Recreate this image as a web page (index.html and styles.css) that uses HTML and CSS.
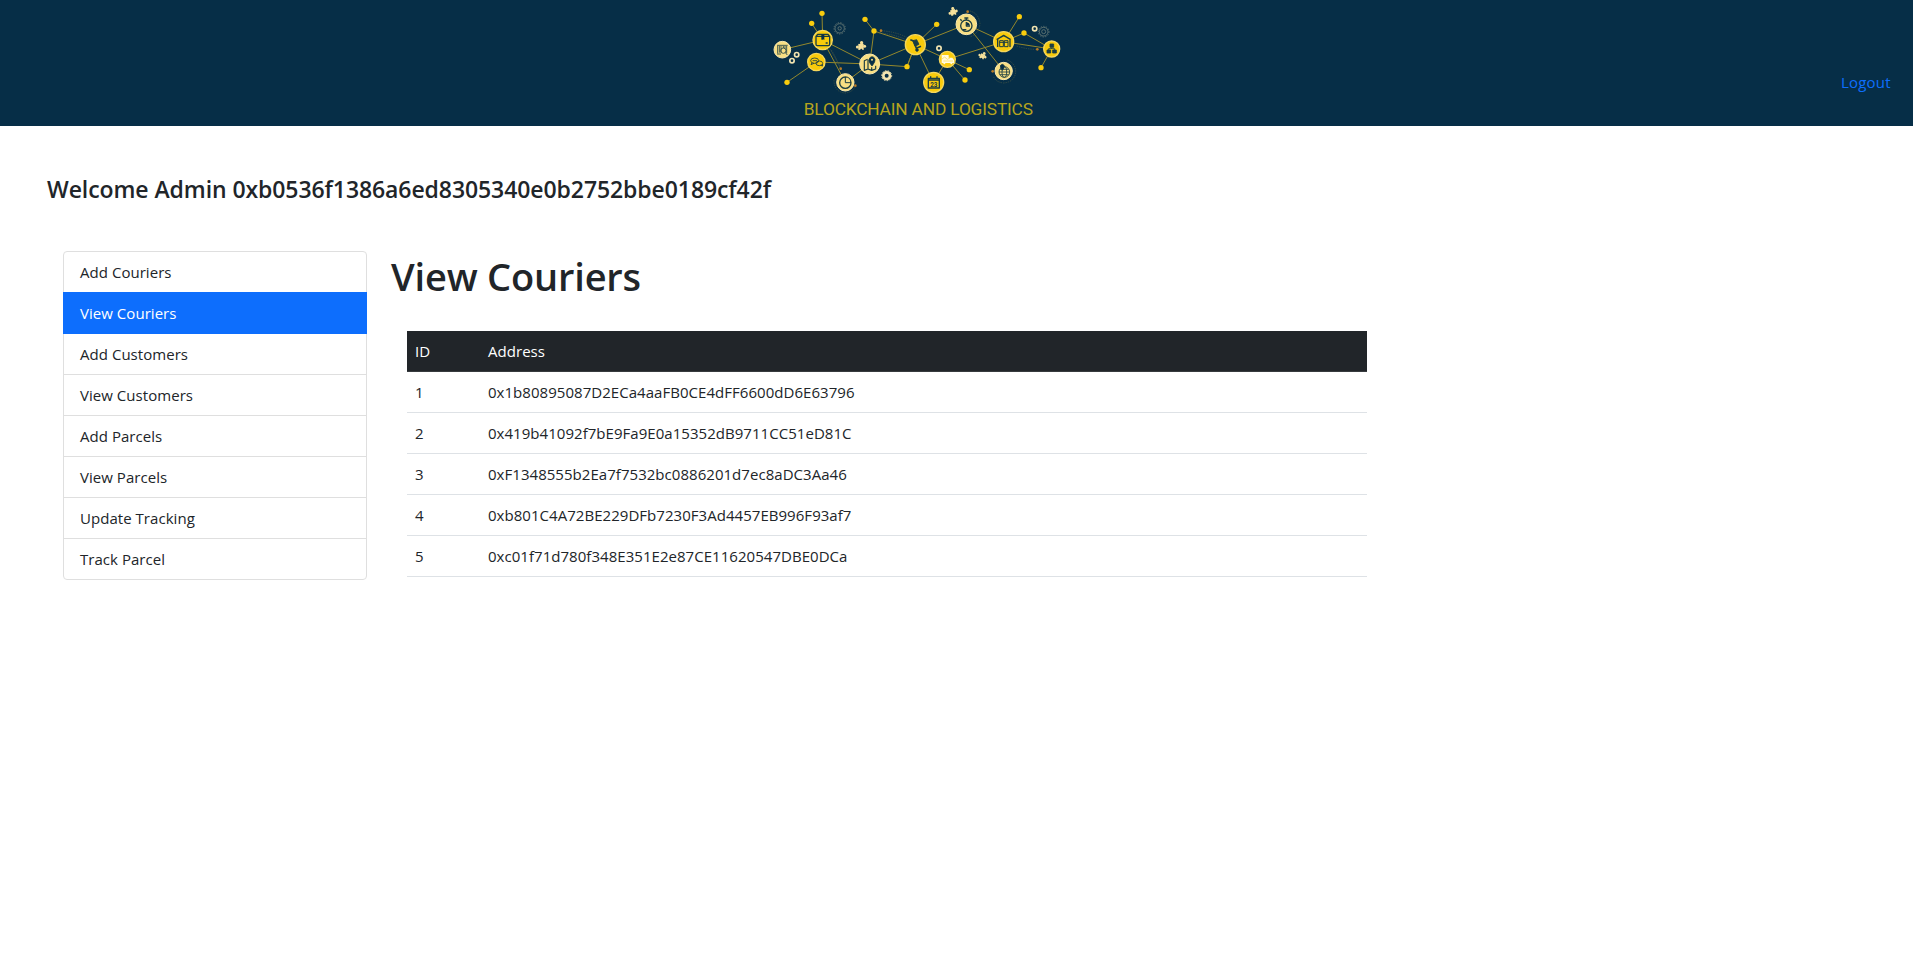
FILE: index.html
```html
<!DOCTYPE html>
<html lang="en">
<head>
<meta charset="utf-8">
<title>Blockchain and Logistics</title>
<link rel="stylesheet" href="styles.css">
</head>
<body>
<header class="topbar">
  <div class="brand">
    <svg class="logo" viewBox="0 0 930 378" role="img" aria-label="Blockchain and Logistics">
      <defs>
        <g id="puzzle" fill="#f5e09a">
          <rect x="-9" y="-7" width="18" height="20"/>
          <circle cx="2" cy="-11" r="5.5"/><circle cx="-12" cy="3" r="5"/><circle cx="12" cy="1" r="5"/>
          <circle cx="1" cy="13" r="3.5" fill="#062e47"/>
        </g>
      </defs>
      <g class="links">
        <path d="M67 149L188 120L186 40M155 70L188 120L329 192L441 200L466 134L342 93L315 58M342 93L329 192L466 134M81 247L169 186L329 192L256 247L188 120"/>
        <path d="M466 134L530 73M466 134L619 73L731 125L778 50M731 125L792 99L875 147L731 125L562 178L466 134L520 247L562 178L628 209M562 178L615 240M619 73L731 213M875 147L843 203M466 134L441 200"/>
      </g>
      <g class="orbits">
        <path d="M206 142Q226 170 241 205M214 150Q232 180 244 212M364 92Q410 96 440 112M352 98Q400 102 436 118M222 240Q222 276 256 279Q276 277 286 260M630 33Q657 40 660 72Q656 100 632 110M742 180Q768 190 767 218Q762 246 731 249Q705 246 700 228M770 138Q800 148 830 148"/>
      </g>
      <g class="dots">
        <circle cx="186" cy="40" r="8"/><circle cx="155" cy="70" r="8"/><circle cx="315" cy="58" r="8"/><circle cx="342" cy="93" r="8"/><circle cx="81" cy="247" r="8"/><circle cx="441" cy="200" r="8"/><circle cx="530" cy="73" r="8"/><circle cx="778" cy="50" r="8"/><circle cx="792" cy="99" r="8"/><circle cx="628" cy="209" r="8"/><circle cx="615" cy="240" r="8"/><circle cx="843" cy="203" r="8"/>
      </g>
      <g class="sparks">
        <circle cx="363" cy="92" r="4"/><circle cx="242" cy="206" r="4"/><circle cx="286" cy="257" r="4"/><circle cx="623" cy="35" r="4"/><circle cx="698" cy="214" r="4"/><circle cx="832" cy="148" r="4"/>
      </g>

      <g class="pale">
        <circle cx="67" cy="149" r="25"/><circle cx="329" cy="192" r="30"/><circle cx="256" cy="247" r="26"/><circle cx="619" cy="73" r="31"/><circle cx="731" cy="213" r="26"/>
      </g>
      <g class="gold">
        <circle cx="188" cy="120" r="29"/><circle cx="169" cy="186" r="26"/><circle cx="466" cy="134" r="30"/><circle cx="521" cy="247" r="30"/><circle cx="562" cy="178" r="24"/><circle cx="731" cy="125" r="30"/><circle cx="875" cy="147" r="24"/>
      </g>

      <g class="rings">
        <circle cx="110" cy="164" r="6.5"/><circle cx="96" cy="182" r="6.5"/><circle cx="537" cy="145" r="6.5"/><circle cx="824" cy="86" r="6.5"/>
        <circle cx="380" cy="227" r="10" stroke-width="8"/>
        <circle cx="380" cy="227" r="15" stroke-width="3" stroke-dasharray="5 4"/>
      </g>
      <g class="gears">
        <circle cx="239" cy="85" r="14"/><circle cx="239" cy="85" r="17" stroke-dasharray="4 4"/><circle cx="239" cy="85" r="5"/>
        <circle cx="851" cy="95" r="13"/><circle cx="851" cy="95" r="16" stroke-dasharray="4 4"/><circle cx="851" cy="95" r="6"/>
      </g>
      <use href="#puzzle" transform="translate(303 138) scale(.9)"/>
      <use href="#puzzle" transform="translate(579 35) rotate(-15) scale(.85)"/>
      <use href="#puzzle" transform="translate(668 167) rotate(25) scale(.75)"/>

      <g class="glyph">
        <path d="M53 138V160M58 138V158M63 138V158M70 138V144M75 138V146M80 138V160M51 136H83M51 162H63"/>
        <circle cx="70" cy="152" r="8"/><path d="M76 158L82 165"/>
        <path d="M168 109L173 103H204L209 109V133Q209 137 205 137H172Q168 137 168 133ZM168 109H209M188 103V119M197 129H203" stroke-width="4"/>
        <path d="M184 104H193V120L188 116L184 120Z" fill="#062e47" stroke="none"/>
        <ellipse cx="164" cy="182" rx="12" ry="8"/><ellipse cx="178" cy="190" rx="10" ry="7"/><path d="M156 188L153 194L162 190M182 196L188 198L187 192M158 182H171"/>
        <path d="M323 178L313 182V211L324 207L335 211L347 207V197M324 180V206M335 202V210" stroke-width="3.5"/>
        <path d="M336 198Q324 185 327 178Q330 170 336 170Q343 170 345 178Q347 185 336 198Z" fill="#062e47"/><circle cx="336" cy="179" r="3" fill="#f8df83" stroke="none"/>
        <circle cx="256" cy="248" r="17" stroke-width="4"/><path d="M256 231V248H273" stroke-width="3"/><path d="M260 232V243H271Q269 235 260 232Z" fill="#f8df83" stroke="none"/>
        <path d="M451 119L461 123L469 145L483 139" stroke-width="5"/><path d="M458 122L470 119L477 133L465 139Z" fill="#1b3d43"/><circle cx="471" cy="150" r="4" fill="#062e47"/>
        <path d="M505 235H538V264H505ZM505 240H538M512 229V237M531 229V237" stroke-width="4"/>
        <circle cx="619" cy="77" r="17" stroke-width="4"/><path d="M613 54H625M619 54V60M605 62L601 58M619 66V78H630M619 89H609" stroke-width="4"/><path d="M621 67V76H630Q628 69 621 67Z" fill="#062e47" stroke="none"/>
        <path d="M713 141V117L731 107L750 117V141M710 119L731 106L752 119" stroke-width="4"/><path d="M719 122H730V140H719ZM733 122H744V140H733Z" stroke-width="3"/><path d="M719 127H744" stroke-width="3"/>
        <circle cx="733" cy="216" r="16"/><ellipse cx="733" cy="216" rx="7" ry="16"/><path d="M717 216H749M720 208H746M720 224H746"/><path d="M727 211Q718 201 722 196Q727 190 732 196Q736 201 727 211Z" fill="#062e47"/>
        <path d="M870 132H881V142H870ZM861 150H872V159H861ZM878 150H889V159H878Z" fill="#1b3d43"/><path d="M875 143V147M866 150V146H884V150"/>
      </g>
      <text class="date" x="521.5" y="260" text-anchor="middle">23</text>
      <g fill="#fffbe0"><path d="M545 165H566V173H577L582 180V189H545Z"/></g>
      <path d="M546 177L554 171L562 178L570 174M550 183H579" fill="none" stroke="#f6cb12" stroke-width="1.5"/>
      <g fill="#fffbe0"><circle cx="553" cy="190" r="3"/><circle cx="574" cy="190" r="3"/></g>
      <text class="wordmark" x="131" y="344" textLength="688" lengthAdjust="spacing">BLOCKCHAIN AND LOGISTICS</text>
    </svg>
  </div>
  <a class="logout">Logout</a>
</header>

<h4 class="welcome">Welcome Admin 0xb0536f1386a6ed8305340e0b2752bbe0189cf42f</h4>

<div class="layout">
  <nav class="menu">
    <a class="menu-item">Add Couriers</a>
    <a class="menu-item active">View Couriers</a>
    <a class="menu-item">Add Customers</a>
    <a class="menu-item">View Customers</a>
    <a class="menu-item">Add Parcels</a>
    <a class="menu-item">View Parcels</a>
    <a class="menu-item">Update Tracking</a>
    <a class="menu-item">Track Parcel</a>
  </nav>
  <main class="content">
    <h1 class="title">View Couriers</h1>
    <table class="couriers">
      <thead><tr><td class="id">ID</td><td>Address</td></tr></thead>
      <tbody>
        <tr><td>1</td><td>0x1b80895087D2ECa4aaFB0CE4dFF6600dD6E63796</td></tr>
        <tr><td>2</td><td>0x419b41092f7bE9Fa9E0a15352dB9711CC51eD81C</td></tr>
        <tr><td>3</td><td>0xF1348555b2Ea7f7532bc0886201d7ec8aDC3Aa46</td></tr>
        <tr><td>4</td><td>0xb801C4A72BE229DFb7230F3Ad4457EB996F93af7</td></tr>
        <tr><td>5</td><td>0xc01f71d780f348E351E2e87CE11620547DBE0DCa</td></tr>
      </tbody>
    </table>
  </main>
</div>
</body>
</html>
```
FILE: styles.css
```css
* { box-sizing: border-box; }

body {
  margin: 0;
  background: #fff;
  color: #212529;
  font: 400 15px/24px "Open Sans", "Noto Sans", sans-serif;
  letter-spacing: .04px;
}

.topbar {
  display: flex;
  height: 126px;
  background: #062e47;
}

.brand { flex: 1; display: flex; justify-content: center; }
.logo { display: block; width: 310px; height: 126px; letter-spacing: 0; }
.logout { width: 83px; padding: 70px 0 0 11px; color: #0d6efd; letter-spacing: .2px; }

.links path { fill: none; stroke: #94882c; stroke-width: 3; }
.orbits path { fill: none; stroke: #4d5a45; stroke-width: 2; stroke-dasharray: 4 3; }
.dots { fill: #f9cc0d; }
.sparks { fill: #b77a27; }
.pale { fill: #f8df83; stroke: #f9e8ad; stroke-width: 3; }
.gold { fill: #f9cb0b; stroke: #f5d75d; stroke-width: 4; }
.rings { fill: none; stroke: #f2e4b0; stroke-width: 5; }
.gears { fill: none; stroke: #667a76; stroke-width: 2.5; }
.glyph { fill: none; stroke: #1b3d43; stroke-width: 2.5; stroke-linejoin: round; }
.date { font: 700 19px Roboto, sans-serif; fill: #1b3d43; }
.wordmark { font: 400 52px Roboto, sans-serif; fill: #b5a41e; }

.welcome {
  margin: 49px 0 0 47px;
  font-size: 23px;
  line-height: 29px;
  font-weight: 600;
  letter-spacing: -.08px;
}

.layout { display: flex; padding: 47px 0 0 63px; }

.menu {
  width: 304px;
  height: 329px;
  border: 1px solid #dfdfdf;
  border-radius: 4px;
}
.menu-item {
  display: block;
  height: 41px;
  padding: 8px 16px;
  border-bottom: 1px solid #dfdfdf;
}
.menu-item:last-child { border-bottom: 0; }
.menu-item.active {
  height: 42px;
  margin: -1px -1px 0;
  padding: 9px 17px;
  background: #0d6efd;
  border-color: #0d6efd;
  color: #fff;
}

.content { width: 976px; margin-left: 24px; }
.title {
  margin: 1px 0 31px;
  font-size: 38px;
  line-height: 48px;
  font-weight: 600;
  letter-spacing: -.18px;
}

.couriers {
  width: 960px;
  margin-left: 16px;
  border-collapse: separate;
  border-spacing: 0;
}
.couriers td {
  height: 41px;
  padding: 8px;
  border-bottom: 1px solid #dee2e6;
}
.couriers thead td { background: #212529; border-color: #373b3e; color: #fff; }
.couriers .id { width: 73px; }
```
